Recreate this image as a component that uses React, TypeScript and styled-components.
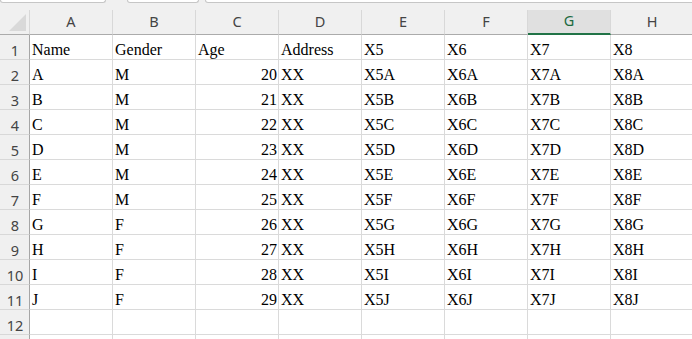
import React from 'react';
import styled, { createGlobalStyle } from 'styled-components';

const GlobalStyle = createGlobalStyle`
  html, body {
    margin: 0;
    padding: 0;
    background: #ffffff;
    overflow: hidden;
  }
`;

const COLS = ['A', 'B', 'C', 'D', 'E', 'F', 'G', 'H'];
const SELECTED_COL = 'G';
const VISIBLE_ROWS = 12;

const letters = ['A', 'B', 'C', 'D', 'E', 'F', 'G', 'H', 'I', 'J'];
const genders = ['M', 'M', 'M', 'M', 'M', 'M', 'F', 'F', 'F', 'F'];

// row 1 is the header row of the data, then 10 people, then empty rows
const rows: { value: string; num?: boolean }[][] = [
  [
    { value: 'Name' },
    { value: 'Gender' },
    { value: 'Age' },
    { value: 'Address' },
    { value: 'X5' },
    { value: 'X6' },
    { value: 'X7' },
    { value: 'X8' }
  ],
  ...letters.map((l, i) => [
    { value: l },
    { value: genders[i] },
    { value: String(20 + i), num: true },
    { value: 'XX' },
    { value: 'X5' + l },
    { value: 'X6' + l },
    { value: 'X7' + l },
    { value: 'X8' + l }
  ]),
  COLS.map(() => ({ value: '' })),
  COLS.map(() => ({ value: '' }))
];

export default function App() {
  return (
    <>
      <GlobalStyle />
      <Page>
        <TopStrip>
          <NameBox />
          <ToolBox />
          <FormulaBox />
        </TopStrip>
        <Sheet>
          <Corner>
            <CornerTriangle />
          </Corner>
          {COLS.map((c) => (
            <ColHead key={c} selected={c === SELECTED_COL}>
              {c}
            </ColHead>
          ))}
          {rows.map((row, r) => (
            <React.Fragment key={r}>
              {/* the 13th row is only a sliver at the bottom edge */}
              <RowHead>{r < VISIBLE_ROWS ? r + 1 : ''}</RowHead>
              {row.map((cell, c) => (
                <Cell key={c} num={cell.num}>
                  {cell.value}
                </Cell>
              ))}
            </React.Fragment>
          ))}
        </Sheet>
      </Page>
    </>
  );
}

const Page = styled.div`
  width: 692px;
  height: 339px;
  overflow: hidden;
  background: #f0f0f0;
`;

const TopStrip = styled.div`
  height: 10px;
  display: flex;
  align-items: flex-start;
  background: #f0f0f0;
`;

const Box = styled.div`
  height: 2px;
  background: #ffffff;
  border: 1px solid #c6c6c6;
  border-top: none;
  border-radius: 0 0 4px 4px;
`;

const NameBox = styled(Box)`
  width: 104px;
`;

const ToolBox = styled(Box)`
  width: 70px;
  margin-left: 21px;
`;

const FormulaBox = styled(Box)`
  flex: 1;
  margin-left: 6px;
  margin-right: -10px;
`;

const Sheet = styled.div`
  display: grid;
  grid-template-columns: 30px repeat(8, 83px);
  grid-auto-rows: 25px;
  width: 694px;
  background: #ffffff;
`;

const Corner = styled.div`
  position: relative;
  background: #f0f0f0;
  border-right: 1px solid #d8d8d8;
  border-bottom: 1px solid #ababab;
`;

const CornerTriangle = styled.div`
  position: absolute;
  right: 3px;
  bottom: 3px;
  width: 0;
  height: 0;
  border-left: 17px solid transparent;
  border-bottom: 17px solid #d9d9d9;
`;

const ColHead = styled.div<{ selected?: boolean }>`
  box-sizing: border-box;
  display: flex;
  align-items: center;
  justify-content: center;
  padding-bottom: 3px;
  background: ${(p) => (p.selected ? '#e0e0e0' : '#f0f0f0')};
  border-right: 1px solid #d8d8d8;
  border-bottom: ${(p) => (p.selected ? '2px solid #217346' : '1px solid #ababab')};
  color: ${(p) => (p.selected ? '#1d6b40' : '#444444')};
  font-family: 'Noto Sans', 'Open Sans', sans-serif;
  font-size: 14.5px;
`;

const RowHead = styled.div`
  box-sizing: border-box;
  display: flex;
  align-items: flex-end;
  justify-content: center;
  padding-left: 1px;
  line-height: 18px;
  background: #f0f0f0;
  border-right: 1px solid #a6a6a6;
  border-bottom: 1px solid #d8d8d8;
  color: #444444;
  font-family: 'Noto Sans', 'Open Sans', sans-serif;
  font-size: 14.5px;
`;

const Cell = styled.div<{ num?: boolean }>`
  box-sizing: border-box;
  display: flex;
  align-items: flex-end;
  justify-content: ${(p) => (p.num ? 'flex-end' : 'flex-start')};
  padding: 0 1px 0 2px;
  line-height: 18px;
  border-right: 1px solid #dadada;
  border-bottom: 1px solid #dadada;
  color: #000000;
  font-family: 'Liberation Serif', 'Times New Roman', serif;
  font-size: 16px;
  white-space: nowrap;
  overflow: hidden;
`;
